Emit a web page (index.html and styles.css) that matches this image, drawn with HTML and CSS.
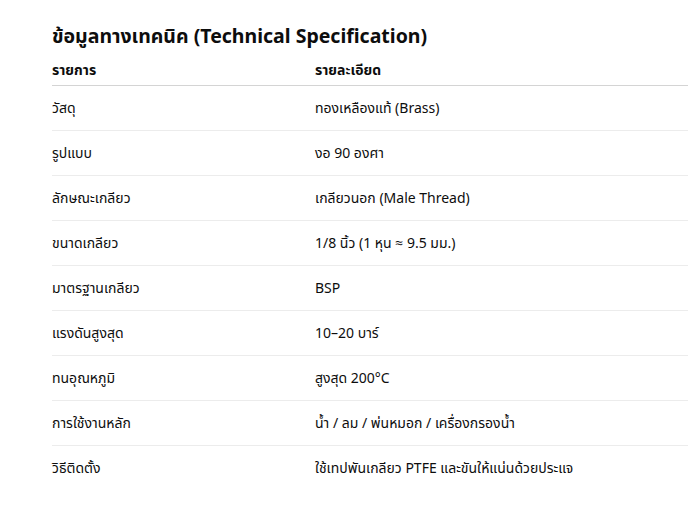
FILE: index.html
```html
<!DOCTYPE html>
<html lang="th">
<head>
<meta charset="utf-8">
<link rel="stylesheet" href="styles.css">
</head>
<body>
<div class="page">
  <h3 class="title">ข้อมูลทางเทคนิค (Technical Specification)</h3>
  <table class="spec">
    <colgroup><col class="c1"><col class="c2"></colgroup>
    <thead>
      <tr><th>รายการ</th><th>รายละเอียด</th></tr>
    </thead>
    <tbody>
      <tr><td>วัสดุ</td><td>ทองเหลืองแท้ (Brass)</td></tr>
      <tr><td>รูปแบบ</td><td>งอ 90 องศา</td></tr>
      <tr><td>ลักษณะเกลียว</td><td>เกลียวนอก (Male Thread)</td></tr>
      <tr><td>ขนาดเกลียว</td><td>1/8 นิ้ว (1 หุน ≈ 9.5 มม.)</td></tr>
      <tr><td>มาตรฐานเกลียว</td><td>BSP</td></tr>
      <tr><td>แรงดันสูงสุด</td><td>10–20 บาร์</td></tr>
      <tr><td>ทนอุณหภูมิ</td><td>สูงสุด 200°C</td></tr>
      <tr><td>การใช้งานหลัก</td><td>น้ำ / ลม / พ่นหมอก / เครื่องกรองน้ำ</td></tr>
      <tr><td>วิธีติดตั้ง</td><td>ใช้เทปพันเกลียว PTFE และขันให้แน่นด้วยประแจ</td></tr>
    </tbody>
  </table>
</div>
</body>
</html>
```
FILE: styles.css
```css
html, body {
  margin: 0;
  padding: 0;
  background: #ffffff;
}
body {
  font-family: "Noto Sans", "Noto Sans Thai", "Open Sans", sans-serif;
  color: #0d0d0d;
  overflow: hidden;
}
.page {
  padding: 22px 0 0 52px;
  width: 636px;
  overflow: hidden;
}
.title {
  margin: 0 0 10px 0;
  font-size: 19.5px;
  line-height: 28px;
  font-weight: 700;
}
.spec {
  width: 700px;
  border-collapse: collapse;
  table-layout: fixed;
  font-size: 14px;
}
.c1 { width: 263px; }
.spec th {
  text-align: left;
  font-weight: 700;
  padding: 0 0 5px 0;
  line-height: 20px;
  border-bottom: 1px solid #d4d4d4;
}
.spec td {
  padding: 12px 0;
  line-height: 20px;
  border-bottom: 1px solid #ececec;
}
.spec tbody tr:last-child td {
  border-bottom: none;
}
```
